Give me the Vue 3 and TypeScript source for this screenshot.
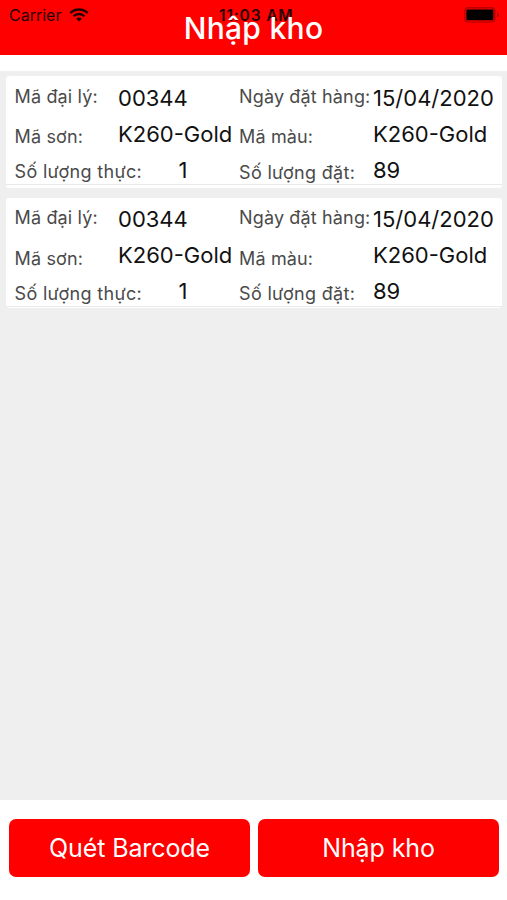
<script setup lang="ts">
interface Order {
  agent: string
  date: string
  paint: string
  color: string
  actual: number
  ordered: number
}

const orders: Order[] = [
  { agent: '00344', date: '15/04/2020', paint: 'K260-Gold', color: 'K260-Gold', actual: 1, ordered: 89 },
  { agent: '00344', date: '15/04/2020', paint: 'K260-Gold', color: 'K260-Gold', actual: 1, ordered: 89 },
]
</script>

<template>
  <div class="screen">
    <header class="header">
      <div class="status">
        <span class="carrier">Carrier</span>
        <svg class="wifi" viewBox="0 0 20 14" width="20" height="14">
          <path d="M1.4 5.2C6 .4 14 .4 18.6 5.2" fill="none" stroke="#250000" stroke-width="2.5" />
          <path d="M4.5 8.3c3-3.1 8-3.1 11 0" fill="none" stroke="#250000" stroke-width="2.3" />
          <path d="M10 13.5 7.2 10.7c1.5-1.5 4.1-1.5 5.6 0z" fill="#250000" />
        </svg>
        <span class="time">11:03 AM</span>
        <svg class="battery" viewBox="0 0 36 16" width="36" height="16">
          <rect x=".8" y=".8" width="30" height="14.2" rx="3" fill="none" stroke="#a00" stroke-width="1.2" />
          <rect x="2.4" y="2.6" width="27" height="10.6" rx="1.2" fill="#000" />
          <path d="M33 5.5c2.4.6 2.4 4.2 0 4.8z" fill="#a00" />
        </svg>
      </div>
      <h1 class="title">Nhập kho</h1>
    </header>

    <main class="list">
      <section v-for="(order, i) in orders" :key="i" class="card">
        <div class="labels">
          <span>Mã đại lý:</span>
          <span>Mã sơn:</span>
          <span>Số lượng thực:</span>
        </div>
        <div class="values">
          <span>{{ order.agent }}</span>
          <span>{{ order.paint }}</span>
          <span class="centered">{{ order.actual }}</span>
        </div>
        <div class="labels right">
          <span>Ngày đặt hàng:</span>
          <span>Mã màu:</span>
          <span>Số lượng đặt:</span>
        </div>
        <div class="values">
          <span>{{ order.date }}</span>
          <span>{{ order.color }}</span>
          <span>{{ order.ordered }}</span>
        </div>
      </section>
    </main>

    <footer class="actions">
      <button type="button">Quét Barcode</button>
      <button type="button">Nhập kho</button>
    </footer>
  </div>
</template>

<style>
body {
  margin: 0;
  background: #fff;
}
</style>

<style scoped>
.screen {
  display: flex;
  flex-direction: column;
  width: 507px;
  height: 900px;
  overflow: hidden;
  background: #fff;
  font-family: Inter, "Liberation Sans", sans-serif;
}
.header {
  position: relative;
  flex: none;
  height: 54.5px;
  background: #f00;
}
.status {
  position: absolute;
  inset: 0 0 auto;
  display: flex;
  align-items: center;
  height: 30px;
  padding: 0 7px 0 9px;
  color: #250000;
  font-size: 16px;
}
.carrier {
  width: 60px;
}
.wifi {
  margin-top: -1px;
}
.time {
  margin-left: 130px;
  font-weight: 600;
  font-size: 15.5px;
  letter-spacing: 0.85px;
  white-space: nowrap;
}
.battery {
  margin-left: auto;
}
.title {
  position: relative;
  margin: 0;
  padding-top: 8px;
  line-height: 41px;
  font-size: 30px;
  font-weight: 500;
  letter-spacing: 0.3px;
  text-align: center;
  color: #fff;
}
.list {
  display: flex;
  flex: none;
  flex-direction: column;
  gap: 9.5px;
  box-sizing: border-box;
  height: 729px;
  margin-top: 16.5px;
  padding: 5px 5px 0 6px;
  background: #efefef;
}
.card {
  display: grid;
  grid-template-columns: 112px 121px 134px 1fr;
  box-sizing: border-box;
  height: 112px;
  border-radius: 3px;
  background: linear-gradient(#e9e9e9, #e9e9e9) 0 108px / 100% 1px no-repeat #fff;
}
.card + .card {
  height: 110.5px;
}
.labels,
.values {
  display: flex;
  flex-direction: column;
  white-space: nowrap;
}
.labels {
  padding: 9px 0 0 8.5px;
  color: #4a4a4a;
  font-size: 18px;
  line-height: 24px;
  letter-spacing: 0.15px;
}
.labels span:nth-child(2) {
  margin: 16px 0 11px;
}
.labels span:nth-child(3) {
  letter-spacing: 0.33px;
}
.labels.right {
  padding-left: 0;
}
.labels.right span:nth-child(3) {
  padding-top: 0.6px;
}
.values {
  padding-top: 4px;
  color: #111;
  font-size: 22px;
  line-height: 36px;
}
.card + .card .labels {
  padding-top: 8px;
}
.card + .card .labels span:nth-child(2) {
  margin-top: 17px;
}
.card + .card .values {
  padding-top: 3px;
}
.centered {
  padding-left: 60.5px;
}
.actions {
  display: flex;
  gap: 8px;
  padding: 19px 8px 0 9px;
}
.actions button {
  flex: 1;
  height: 58px;
  padding: 0;
  border: 0;
  border-radius: 7px;
  background: #f00;
  color: #fff;
  font: 400 25px/58px Inter, "Liberation Sans", sans-serif;
  letter-spacing: -0.1px;
}
</style>
